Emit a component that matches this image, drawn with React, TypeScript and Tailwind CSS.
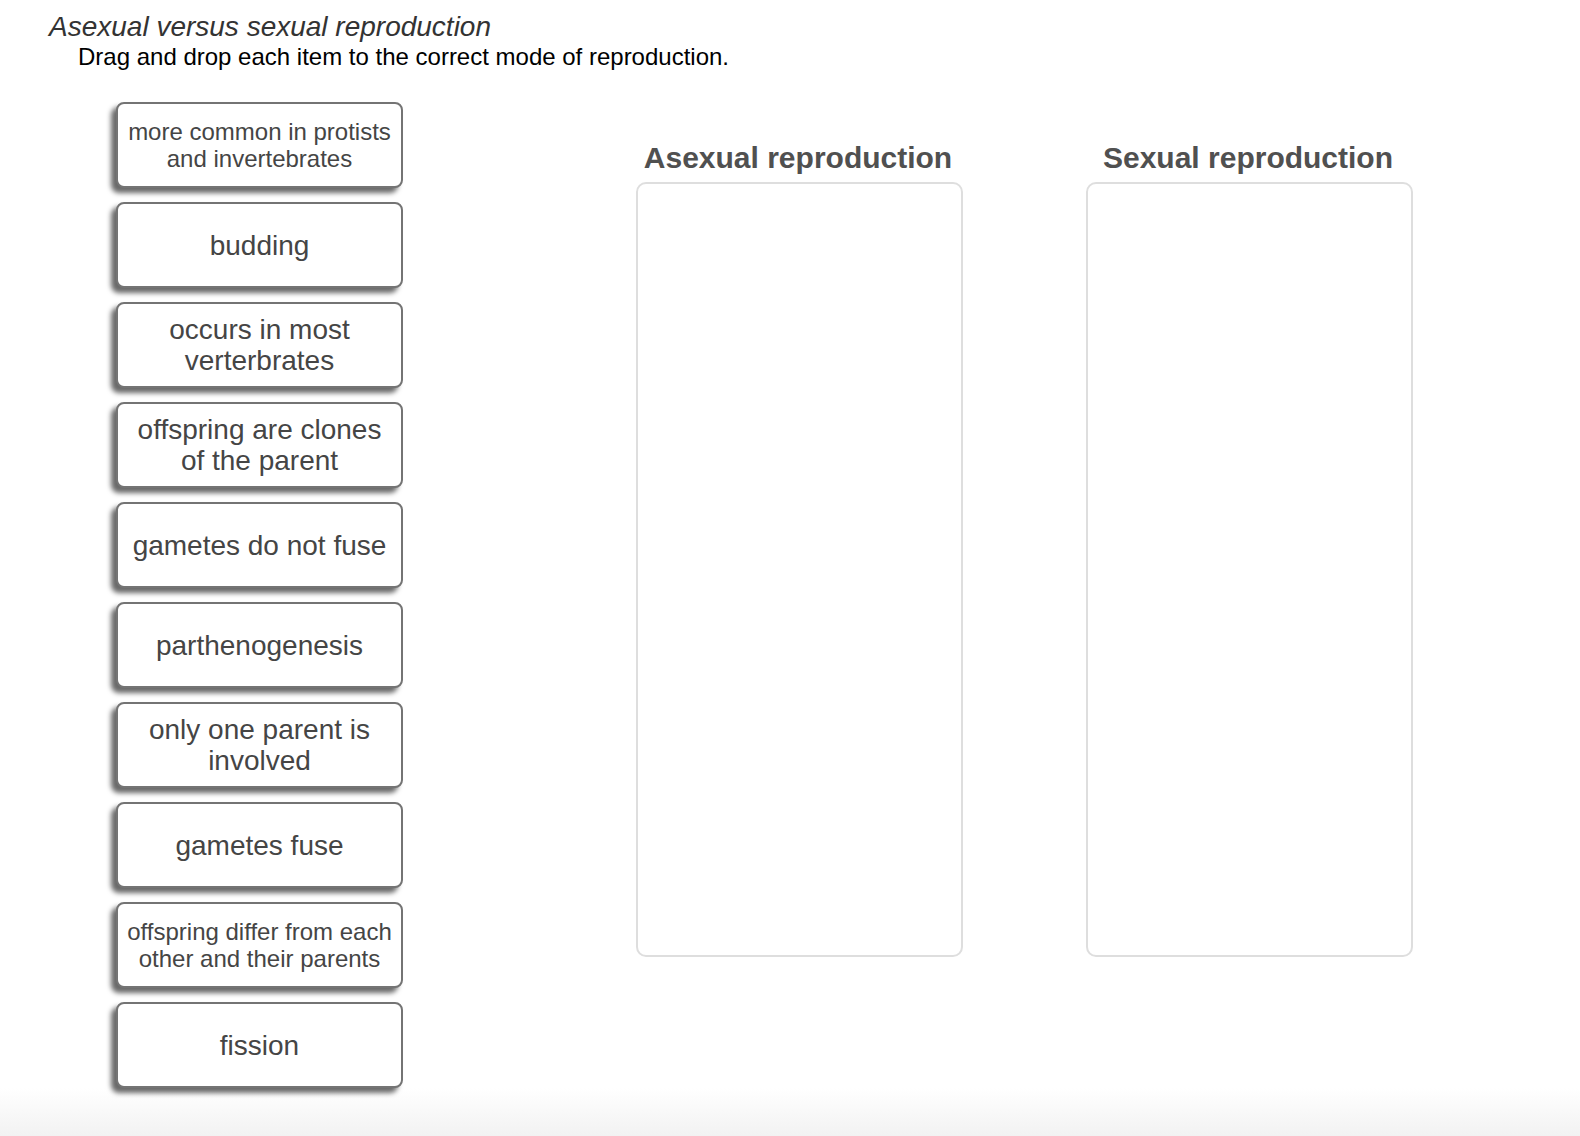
import React from 'react'

interface Item {
  id: string
  lines: string[]
  small?: boolean
}

const items: Item[] = [
  { id: 'protists', lines: ['more common in protists', 'and invertebrates'], small: true },
  { id: 'budding', lines: ['budding'] },
  { id: 'vertebrates', lines: ['occurs in most', 'verterbrates'] },
  { id: 'clones', lines: ['offspring are clones', 'of the parent'] },
  { id: 'nofuse', lines: ['gametes do not fuse'] },
  { id: 'partheno', lines: ['parthenogenesis'] },
  { id: 'oneparent', lines: ['only one parent is', 'involved'] },
  { id: 'fuse', lines: ['gametes fuse'] },
  { id: 'differ', lines: ['offspring differ from each', 'other and their parents'], small: true },
  { id: 'fission', lines: ['fission'] }
]

const bins = ['Asexual reproduction', 'Sexual reproduction']

function DragItem({ item }: { item: Item }) {
  return (
    <div className="flex h-[86px] w-[287px] cursor-move flex-col items-center justify-center rounded-[8px] border-2 border-[#747474] bg-white text-center text-[#454545] shadow-[-5px_5px_5px_#6a6a6a]">
      {item.lines.map((line) => (
        <span
          key={line}
          className={item.small ? 'text-[24px] leading-[27px]' : 'text-[28px] leading-[31px]'}
        >
          {line}
        </span>
      ))}
    </div>
  )
}

function DropZone({ label }: { label: string }) {
  return (
    <div className="flex w-[327px] flex-col items-center">
      <h2 className="mb-[7px] pr-[3px] text-[30px] font-bold leading-[34px] text-[#505050]">{label}</h2>
      <div className="h-[775px] w-full rounded-[10px] border-2 border-[#dedede] bg-white" />
    </div>
  )
}

export default function App() {
  return (
    <div
      className="h-[1136px] w-full overflow-hidden bg-[linear-gradient(to_bottom,#ffffff_1088px,#f2f2f2_1136px)]"
      style={{ fontFamily: '"Liberation Sans", Arial, Helvetica, sans-serif' }}
    >
      <div className="pl-[49px] pt-[11px]">
        <h1 className="text-[28px] italic leading-[32px] text-[#333333]">
          Asexual versus sexual reproduction
        </h1>
        <p className="pl-[29px] text-[24px] leading-[28px] text-black">
          Drag and drop each item to the correct mode of reproduction.
        </p>
      </div>

      <div className="mt-[31px] flex items-start pl-[116px]">
        <div className="flex flex-col gap-[14px]">
          {items.map((item) => (
            <DragItem key={item.id} item={item} />
          ))}
        </div>

        <div className="ml-[233px] mt-[39px] flex gap-[123px]">
          {bins.map((label) => (
            <DropZone key={label} label={label} />
          ))}
        </div>
      </div>
    </div>
  )
}
